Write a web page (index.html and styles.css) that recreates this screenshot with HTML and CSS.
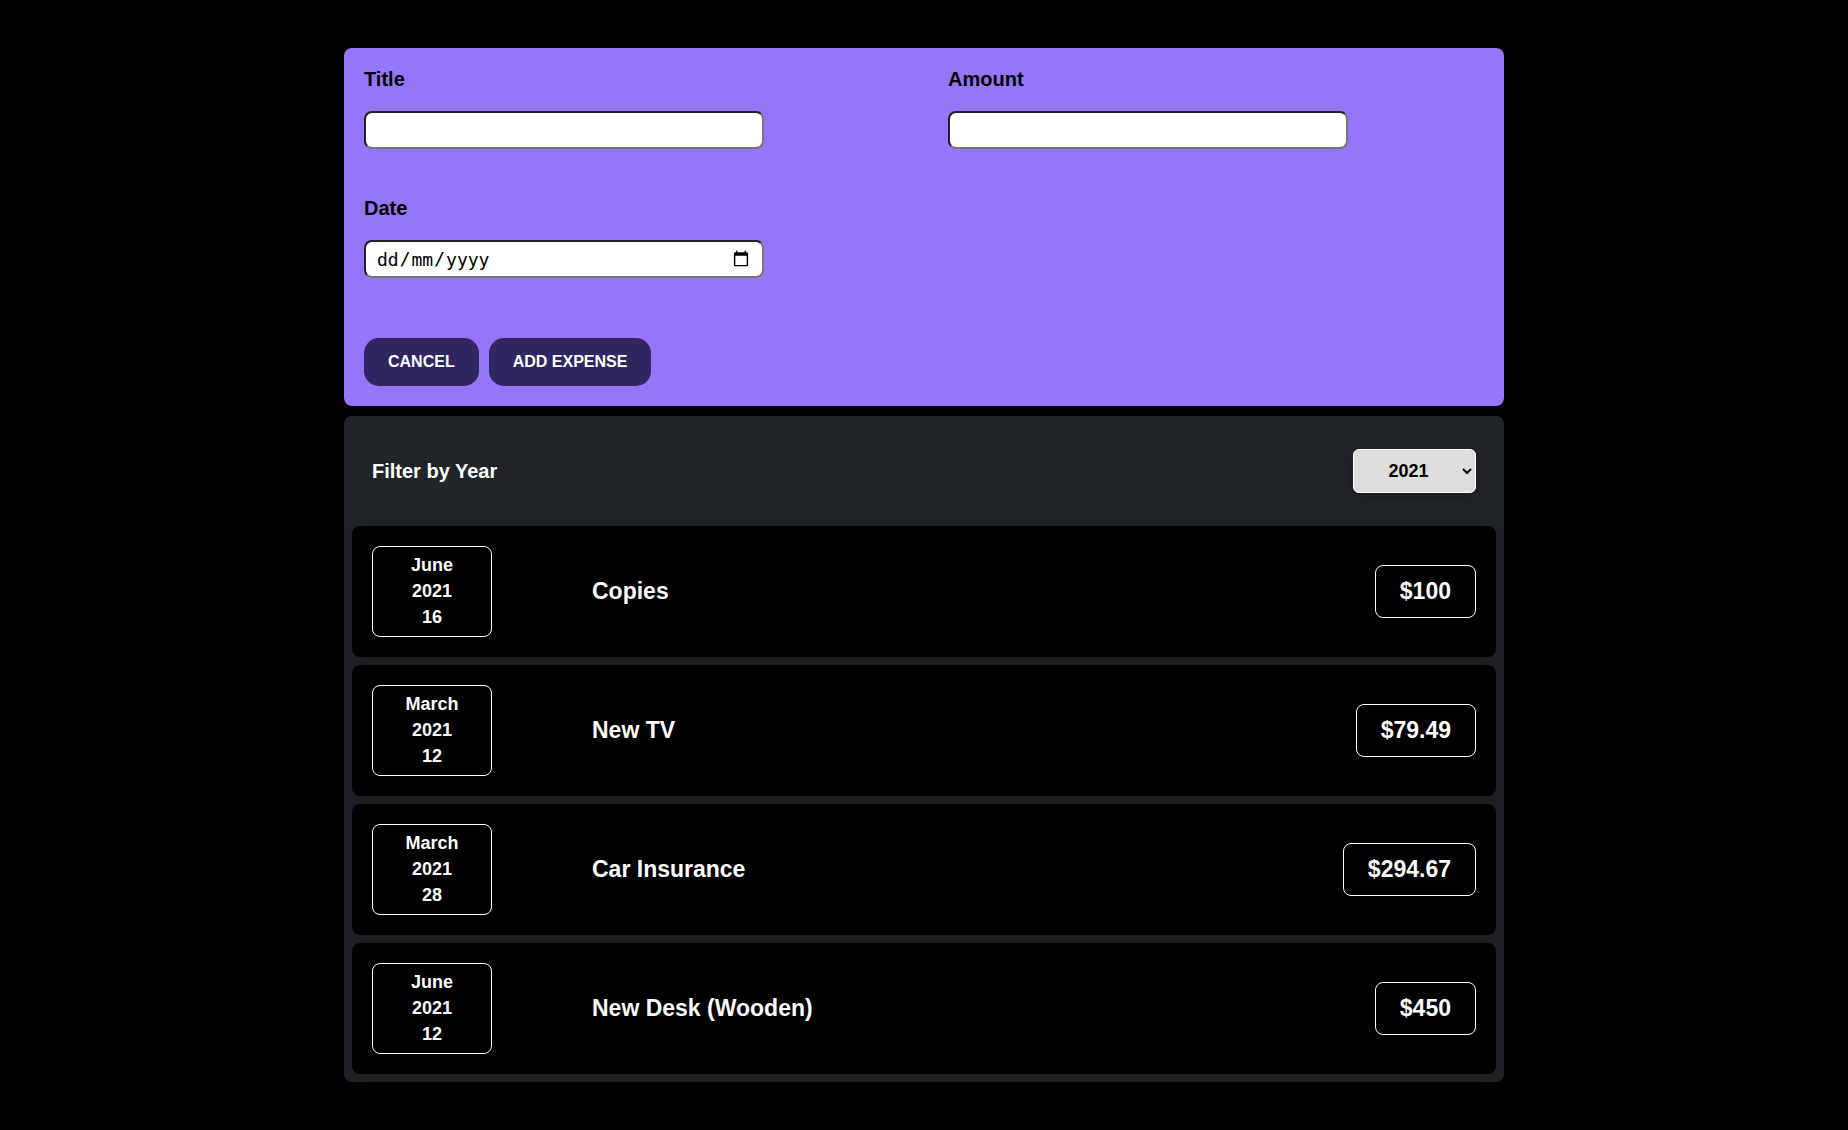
FILE: index.html
```html
<!DOCTYPE html>
<html lang="en-GB">
<head>
<meta charset="utf-8">
<meta name="viewport" content="width=device-width, initial-scale=1">
<title>Expenses</title>
<link rel="stylesheet" href="styles.css">
</head>
<body>
<main class="page">
  <form class="expense-form">
    <div class="fields">
      <div class="field">
        <label for="title">Title</label>
        <input id="title" type="text">
      </div>
      <div class="field">
        <label for="amount">Amount</label>
        <input id="amount" type="number" min="0" step="0.01">
      </div>
      <div class="field">
        <label for="date">Date</label>
        <input id="date" type="date">
      </div>
    </div>
    <div class="actions">
      <button type="button">CANCEL</button>
      <button type="submit">ADD EXPENSE</button>
    </div>
  </form>

  <section class="expenses">
    <div class="filter">
      <label for="year">Filter by Year</label>
      <select id="year">
        <option>2022</option>
        <option selected>2021</option>
        <option>2020</option>
        <option>2019</option>
      </select>
    </div>
    <ul class="list">
      <li class="item">
        <div class="date"><span>June</span><span>2021</span><span>16</span></div>
        <h2>Copies</h2>
        <div class="price">$100</div>
      </li>
      <li class="item">
        <div class="date"><span>March</span><span>2021</span><span>12</span></div>
        <h2>New TV</h2>
        <div class="price">$79.49</div>
      </li>
      <li class="item">
        <div class="date"><span>March</span><span>2021</span><span>28</span></div>
        <h2>Car Insurance</h2>
        <div class="price">$294.67</div>
      </li>
      <li class="item">
        <div class="date"><span>June</span><span>2021</span><span>12</span></div>
        <h2>New Desk (Wooden)</h2>
        <div class="price">$450</div>
      </li>
    </ul>
  </section>
</main>
</body>
</html>
```
FILE: styles.css
```css
* {
  box-sizing: border-box;
}

body {
  margin: 0;
  background: #000;
  color: #fff;
  font-family: "Liberation Sans", Arial, sans-serif;
  font-weight: 700;
}

.page {
  display: flex;
  flex-direction: column;
  gap: 10px;
  max-width: 1160px;
  margin: 0 auto;
  padding: 48px 0;
}

.expense-form {
  padding: 20px;
  border-radius: 8px;
  background: #9775fa;
  color: #000;
}

.fields {
  display: grid;
  grid-template-columns: 1fr 1fr;
  gap: 48px;
}

.field {
  display: flex;
  flex-direction: column;
  gap: 20px;
  font-size: 20px;
  line-height: 23px;
}

.field input {
  width: 400px;
  max-width: 100%;
  height: 38px;
  padding: 0 10px;
  border: 2px inset #767676;
  border-radius: 8px;
  background: #fff;
  color: #000;
  font-family: "Liberation Sans", Arial, sans-serif;
  font-size: 18px;
}

.field input[type="date"] {
  font-family: monospace;
}

/* Day first, whatever the browser's locale; the slashes fill columns 2 and 4 */
::-webkit-datetime-edit-fields-wrapper {
  display: inline-grid;
  grid-template-columns: repeat(5, max-content);
}

::-webkit-datetime-edit-text {
  grid-row: 1;
}

::-webkit-datetime-edit-day-field {
  grid-area: 1 / 1;
}

::-webkit-datetime-edit-month-field {
  grid-area: 1 / 3;
}

::-webkit-datetime-edit-year-field {
  grid-area: 1 / 5;
}

.actions {
  display: flex;
  gap: 10px;
  margin-top: 60px;
}

.actions button {
  height: 48px;
  padding: 0 24px;
  border: 0;
  border-radius: 15px;
  background: #302761;
  color: #fff;
  font: 700 16px "Liberation Sans", Arial, sans-serif;
  cursor: pointer;
}

.expenses {
  padding: 8px;
  border-radius: 8px;
  background: #212529;
}

.filter {
  display: flex;
  align-items: center;
  justify-content: space-between;
  height: 102px;
  padding: 0 20px 8px;
  font-size: 20px;
}

.filter select {
  width: 123px;
  height: 44px;
  border: 1px solid #fff;
  border-radius: 6px;
  background: #ddd;
  color: #000;
  font: 700 18px "Liberation Sans", Arial, sans-serif;
  text-align: center;
  box-shadow: 0 2px 10px rgba(0, 0, 0, 0.25);
}

.list {
  display: flex;
  flex-direction: column;
  gap: 8px;
  margin: 0;
  padding: 0;
  list-style: none;
}

.item {
  display: flex;
  align-items: center;
  padding: 20px;
  border-radius: 8px;
  background: #000;
  box-shadow: 0 2px 20px rgba(0, 0, 0, 0.25);
}

.date {
  display: flex;
  flex-direction: column;
  width: 120px;
  padding: 5px 0 6px;
  border: 1px solid #fff;
  border-radius: 8px;
  font-size: 18px;
  line-height: 26px;
  text-align: center;
}

.item h2 {
  flex: 1;
  margin: 0 0 0 100px;
  font-size: 23px;
}

.price {
  padding: 0 24px;
  border: 1px solid #fff;
  border-radius: 8px;
  font-size: 23px;
  line-height: 51px;
}
```
